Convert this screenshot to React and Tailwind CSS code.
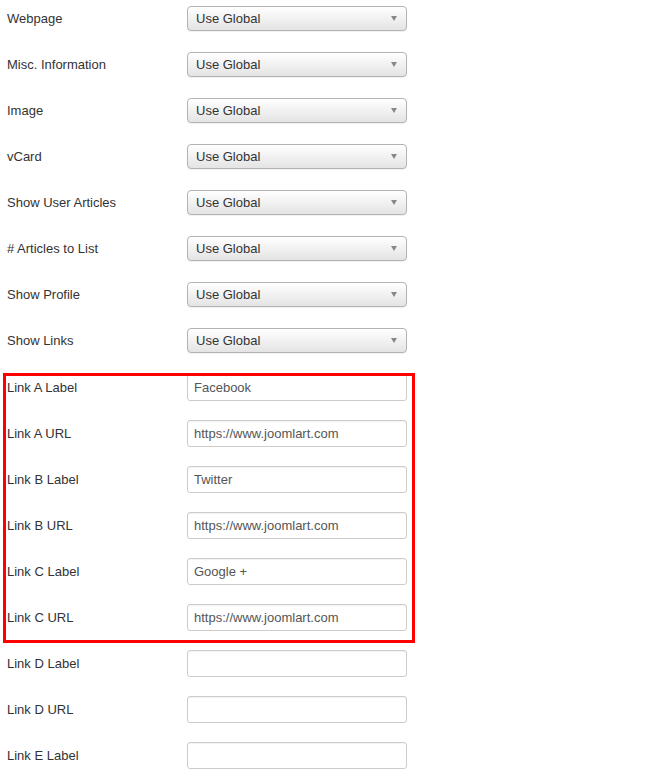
import React from 'react';

const font = { fontFamily: '"Liberation Sans", Arial, sans-serif' };

const rows = [
  { label: 'Webpage', type: 'select' },
  { label: 'Misc. Information', type: 'select' },
  { label: 'Image', type: 'select' },
  { label: 'vCard', type: 'select' },
  { label: 'Show User Articles', type: 'select' },
  { label: '# Articles to List', type: 'select' },
  { label: 'Show Profile', type: 'select' },
  { label: 'Show Links', type: 'select' },
  { label: 'Link A Label', type: 'input', value: 'Facebook' },
  { label: 'Link A URL', type: 'input', value: 'https://www.joomlart.com' },
  { label: 'Link B Label', type: 'input', value: 'Twitter' },
  { label: 'Link B URL', type: 'input', value: 'https://www.joomlart.com' },
  { label: 'Link C Label', type: 'input', value: 'Google +' },
  { label: 'Link C URL', type: 'input', value: 'https://www.joomlart.com' },
  { label: 'Link D Label', type: 'input', value: '' },
  { label: 'Link D URL', type: 'input', value: '' },
  { label: 'Link E Label', type: 'input', value: '' },
];

const Select = () => (
  <div className="mt-[6px] flex h-[25px] w-[220px] items-center justify-between rounded-[4px] border border-[#b3b3b3] bg-gradient-to-b from-white to-[#e4e4e4] pl-[8px] pr-[9px] text-[13px] text-[#333] shadow-[0_1px_1px_rgba(0,0,0,0.06)]">
    <span>Use Global</span>
    <span className="h-0 w-0 border-x-[3.5px] border-t-[5px] border-x-transparent border-t-[#888]" />
  </div>
);

const Input = ({ value }) => (
  <div className="mt-[6px] flex h-[27px] w-[220px] items-center rounded-[3px] border border-[#cccccc] bg-white px-[6px] text-[13px] text-[#555] shadow-[inset_0_1px_1px_rgba(0,0,0,0.05)]">
    {value}
  </div>
);

const Row = ({ row }) => (
  <div className="flex h-[46px] items-start">
    <div
      className={`flex w-[187px] items-center pl-[7px] text-[13px] text-[#333] ${
        row.type === 'select' ? 'mt-[6px] h-[25px]' : 'mt-[6px] h-[28px]'
      }`}
    >
      {row.label}
    </div>
    {row.type === 'select' ? <Select /> : <Input value={row.value} />}
  </div>
);

export default function App() {
  return (
    <div className="relative h-[770px] w-[647px] overflow-hidden bg-white" style={font}>
      {rows.map((row) => (
        <Row key={row.label} row={row} />
      ))}
      <div className="pointer-events-none absolute left-[3px] top-[373px] h-[270px] w-[412px] border-[3px] border-[#ff0000]" />
    </div>
  );
}
